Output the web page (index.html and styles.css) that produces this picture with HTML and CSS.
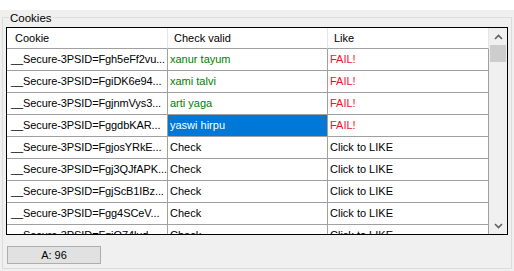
FILE: index.html
```html
<!DOCTYPE html>
<html lang="en">
<head>
  <meta charset="UTF-8" />
  <title>Cookies</title>
  <link rel="stylesheet" href="styles.css">
</head>
<body>

<div class="window">
  <div class="group">
    <span class="group-title">Cookies</span>

    <div class="grid">
      <div class="table">
        <div class="row head">
          <div class="cell">Cookie</div>
          <div class="cell">Check valid</div>
          <div class="cell">Like</div>
        </div>
        <div class="row">
          <div class="cell">__Secure-3PSID=Fgh5eFf2vu...</div>
          <div class="cell ok">xanur tayum</div>
          <div class="cell fail">FAIL!</div>
        </div>
        <div class="row">
          <div class="cell">__Secure-3PSID=FgiDK6e94...</div>
          <div class="cell ok">xami talvi</div>
          <div class="cell fail">FAIL!</div>
        </div>
        <div class="row">
          <div class="cell">__Secure-3PSID=FgjnmVys3...</div>
          <div class="cell ok">arti yaga</div>
          <div class="cell fail">FAIL!</div>
        </div>
        <div class="row">
          <div class="cell">__Secure-3PSID=FggdbKAR...</div>
          <div class="cell selected">yaswi hirpu</div>
          <div class="cell fail">FAIL!</div>
        </div>
        <div class="row">
          <div class="cell">__Secure-3PSID=FgjosYRkE...</div>
          <div class="cell">Check</div>
          <div class="cell">Click to LIKE</div>
        </div>
        <div class="row">
          <div class="cell">__Secure-3PSID=Fgj3QJfAPK...</div>
          <div class="cell">Check</div>
          <div class="cell">Click to LIKE</div>
        </div>
        <div class="row">
          <div class="cell">__Secure-3PSID=FgjScB1IBz...</div>
          <div class="cell">Check</div>
          <div class="cell">Click to LIKE</div>
        </div>
        <div class="row">
          <div class="cell">__Secure-3PSID=Fgg4SCeV...</div>
          <div class="cell">Check</div>
          <div class="cell">Click to LIKE</div>
        </div>
        <div class="row">
          <div class="cell">__Secure-3PSID=FgjQ74lud...</div>
          <div class="cell">Check</div>
          <div class="cell">Click to LIKE</div>
        </div>
      </div>

      <div class="scrollbar">
        <div class="arrow">
          <svg width="9" height="6" viewBox="0 0 9 6"><polyline points="1,5 4.5,1.5 8,5" fill="none" stroke="#606060" stroke-width="1.6"/></svg>
        </div>
        <div class="thumb"></div>
        <div class="track"></div>
        <div class="arrow">
          <svg width="9" height="6" viewBox="0 0 9 6"><polyline points="1,1 4.5,4.5 8,1" fill="none" stroke="#606060" stroke-width="1.6"/></svg>
        </div>
      </div>
    </div>

    <div class="status">A: 96</div>
  </div>
</div>

</body>
</html>
```

FILE: styles.css
```css
    body {
      margin: 0;
      padding: 0;
      background: white;
      font-family: 'Liberation Sans', Arial, sans-serif;
      font-size: 11px;
      color: #000;
    }

    .window {
      margin-top: 10px;
      height: 261px;
      background: #f0f0f0;
      padding-top: 7px;
      box-sizing: border-box;
    }

    .group {
      position: relative;
      margin-left: 2px;
      width: 510px;
      height: 252px;
      border: 1px solid #dcdcdc;
      box-sizing: border-box;
      padding: 9px 0 0 3px;
    }

    .group-title {
      position: absolute;
      left: 6px;
      top: -6px;
      padding: 0 1px;
      background: #f0f0f0;
      font-size: 11.5px;
      line-height: 12px;
    }

    .grid {
      display: flex;
      width: 502px;
      height: 208px;
      border: 1px solid #000;
      box-sizing: border-box;
    }

    .table {
      width: 482px;
      overflow: hidden;
      background: white;
    }

    .row {
      display: grid;
      grid-template-columns: 161px 160px 161px;
      height: 22px;
    }

    .cell {
      box-sizing: border-box;
      border-right: 1px solid #a0a0a0;
      border-bottom: 1px solid #a0a0a0;
      padding-left: 2px;
      line-height: 21px;
      white-space: nowrap;
      overflow: hidden;
    }

    .row .cell:first-child {
      padding-left: 4px;
      letter-spacing: -0.1px;
    }

    .head {
      height: 21px;
    }

    .head .cell {
      line-height: 20px;
      padding-left: 6px;
      border-right-color: #e5e5e5;
    }

    .head .cell:first-child {
      padding-left: 8px;
      letter-spacing: 0;
    }

    .ok {
      color: #008000;
    }

    .fail {
      color: #f5102e;
    }

    .selected {
      background: #0078d7;
      color: white;
    }

    .scrollbar {
      width: 18px;
      display: flex;
      flex-direction: column;
      background: #f0f0f0;
    }

    .arrow {
      height: 17px;
      display: flex;
      align-items: center;
      justify-content: center;
    }

    .thumb {
      margin: 0 1px;
      height: 17px;
      background: #cdcdcd;
    }

    .track {
      flex: 1;
    }

    .status {
      margin: 11px 0 0 1px;
      width: 94px;
      height: 18px;
      box-sizing: border-box;
      border: 1px solid #adadad;
      background: #e1e1e1;
      text-align: center;
      line-height: 16px;
    }
```
